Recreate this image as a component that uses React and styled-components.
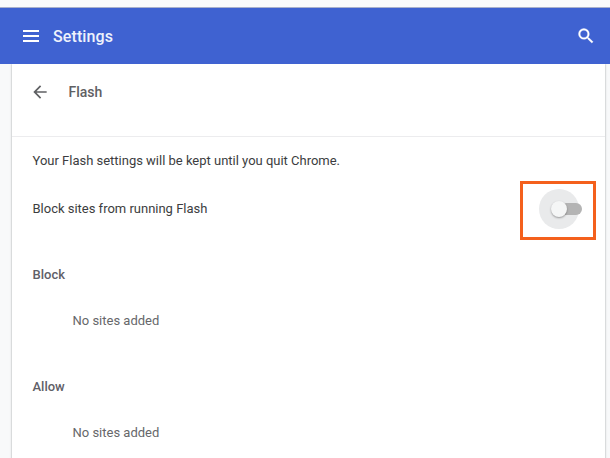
import React from 'react';
import styled, { createGlobalStyle } from 'styled-components';

const GlobalStyle = createGlobalStyle`
  * { box-sizing: border-box; }
  body {
    margin: 0;
    background: #f8f9fa;
    font-family: Roboto, "Liberation Sans", sans-serif;
    font-size: 13px;
    color: #3c3d40;
    overflow: hidden;
  }
  h1, h2, h3, p { margin: 0; }
`;

const Page = styled.div`
  display: flex;
  flex-direction: column;
  height: 458px;
  overflow: hidden;
`;

const WindowEdge = styled.div`
  flex: none;
  height: 8px;
  background: #fafbfc;
  border-bottom: 1px solid #a9b1cc;
`;

const Toolbar = styled.header`
  flex: none;
  display: flex;
  align-items: center;
  height: 56px;
  padding: 0 14px 0 19px;
  background: #3f62d1;
  color: #fff;
`;

const ToolbarTitle = styled.h1`
  flex: 1;
  margin-left: 10px;
  font-size: 16px;
  font-weight: 500;
  line-height: 24px;
  letter-spacing: 0.1px;
  padding-top: 1px;
  color: #eef2fc;
`;

const IconButton = styled.button`
  display: flex;
  padding: 0;
  border: 0;
  background: none;
  color: inherit;
`;

const Icon = styled.svg`
  display: block;
  width: ${(p) => p.$size}px;
  height: ${(p) => p.$size}px;
  fill: currentColor;
  stroke: currentColor;
  stroke-width: ${(p) => p.$weight || 0};
`;

const Card = styled.main`
  flex: 1;
  margin: 0 5px 0 12px;
  background: #fff;
  box-shadow: 0 0 2px rgba(60, 64, 67, 0.5);
  clip-path: inset(0 -5px);
`;

const SubpageHeader = styled.div`
  display: flex;
  align-items: center;
  height: 73px;
  padding: 0 18px 17px;
  border-bottom: 1px solid #ececee;
  color: #5f6063;
`;

const SubpageTitle = styled.h2`
  margin-left: 18.5px;
  font-size: 14px;
  font-weight: 500;
  line-height: 20px;
`;

const SettingRow = styled.div`
  display: flex;
  align-items: center;
  justify-content: space-between;
  height: 48px;
  padding: 0 9px 2px 20.5px;
  letter-spacing: -0.01px;
`;

const Highlight = styled.div`
  flex: none;
  display: flex;
  align-items: center;
  justify-content: center;
  width: 76px;
  height: 59px;
  margin-top: 5px;
  border: 3px solid #f4601c;
`;

const Toggle = styled.button`
  position: relative;
  display: block;
  width: 31px;
  height: 12px;
  margin: 0 0 3px 17px;
  padding: 0;
  border: 0;
  background: none;
`;

const Ripple = styled.span`
  position: absolute;
  left: -12px;
  top: -14px;
  width: 40px;
  height: 40px;
  border-radius: 50%;
  background: #e9eaeb;
`;

const Track = styled.span`
  position: absolute;
  inset: 0 0 0 2px;
  border-radius: 6px;
  background: #b4b4b4;
`;

const Knob = styled.span`
  position: absolute;
  left: 0;
  top: -2px;
  width: 16px;
  height: 16px;
  border-radius: 50%;
  background: #f5f6f6;
  box-shadow: 0 1px 2px rgba(0, 0, 0, 0.35);
`;

const SiteSection = styled.section`
  height: 112px;
  padding-top: ${(p) => p.$top || 0}px;
  box-sizing: content-box;
`;

const SectionTitle = styled.h3`
  padding-left: 20.5px;
  font-size: 13px;
  font-weight: 500;
  line-height: 20px;
  color: #5f6067;
`;

const EmptyList = styled.p`
  padding: 26px 0 0 60.5px;
  line-height: 20px;
  color: #66676a;
`;

function SiteList({ title, top }) {
  return (
    <SiteSection $top={top}>
      <SectionTitle>{title}</SectionTitle>
      <EmptyList>No sites added</EmptyList>
    </SiteSection>
  );
}

export default function App() {
  return (
    <Page>
      <GlobalStyle />
      <WindowEdge />
      <Toolbar>
        <IconButton aria-label="Main menu">
          <Icon $size={24} viewBox="0 0 24 24">
            <path d="M4 6h16v2H4zM4 11h16v2H4zM4 16h16v2H4z" />
          </Icon>
        </IconButton>
        <ToolbarTitle>Settings</ToolbarTitle>
        <IconButton aria-label="Search settings">
          <Icon $size={20} $weight={0.4} viewBox="0 0 24 24">
            <path d="M15.5 14h-.79l-.28-.27A6.47 6.47 0 0 0 16 9.5 6.5 6.5 0 1 0 9.5 16c1.61 0 3.09-.59 4.23-1.57l.27.28v.79l5 4.99L20.49 19l-4.99-5zm-6 0C7.01 14 5 11.99 5 9.5S7.01 5 9.5 5 14 7.01 14 9.5 11.99 14 9.5 14z" />
          </Icon>
        </IconButton>
      </Toolbar>
      <Card>
        <SubpageHeader>
          <IconButton aria-label="Back">
            <Icon $size={20} viewBox="0 0 24 24">
              <path d="M20 11H7.83l5.59-5.59L12 4l-8 8 8 8 1.41-1.41L7.83 13H20v-2z" />
            </Icon>
          </IconButton>
          <SubpageTitle>Flash</SubpageTitle>
        </SubpageHeader>
        <SettingRow>Your Flash settings will be kept until you quit Chrome.</SettingRow>
        <SettingRow>
          Block sites from running Flash
          <Highlight>
            <Toggle role="switch" aria-checked="false" aria-label="Block sites from running Flash">
              <Ripple />
              <Track />
              <Knob />
            </Toggle>
          </Highlight>
        </SettingRow>
        <SiteList title="Block" top={32} />
        <SiteList title="Allow" />
      </Card>
    </Page>
  );
}
